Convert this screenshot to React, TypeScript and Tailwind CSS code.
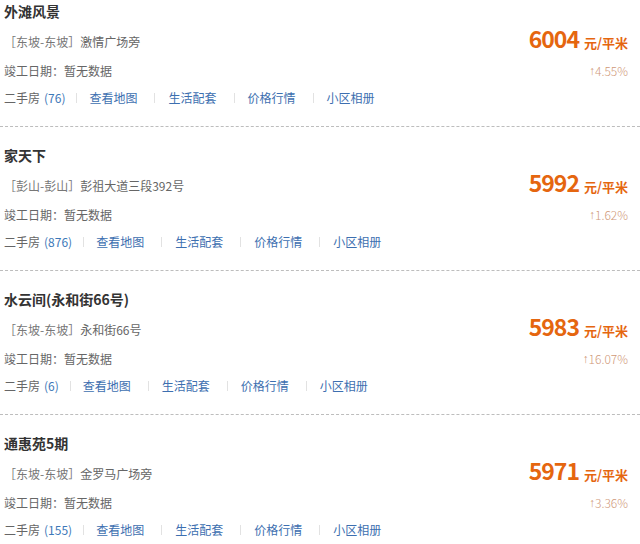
import React from "react";

type Item = {
  name: string;
  area: string;
  addr: string;
  price: string;
  pct: string;
  count: string;
};

const items: Item[] = [
  { name: "外滩风景", area: "东坡-东坡", addr: "激情广场旁", price: "6004", pct: "4.55%", count: "76" },
  { name: "家天下", area: "彭山-彭山", addr: "彭祖大道三段392号", price: "5992", pct: "1.62%", count: "876" },
  { name: "水云间(永和街66号)", area: "东坡-东坡", addr: "永和街66号", price: "5983", pct: "16.07%", count: "6" },
  { name: "通惠苑5期", area: "东坡-东坡", addr: "金罗马广场旁", price: "5971", pct: "3.36%", count: "155" },
];

const font = { fontFamily: '"Microsoft YaHei", "Noto Sans CJK SC", "Noto Sans", sans-serif' };

function Sep({ first }: { first?: boolean }) {
  return (
    <span
      className={
        first
          ? "ml-[11px] mr-[12px] inline-block h-[10px] w-px bg-[#e2e2e2]"
          : "ml-[17px] mr-[13px] inline-block h-[10px] w-px bg-[#e2e2e2]"
      }
    />
  );
}

function Block({ it, first }: { it: Item; first: boolean }) {
  return (
    <div className={first ? "pt-[1px]" : "pt-[18px]"}>
      <div className="border-b border-dashed border-[#bdbdbd]">
        <div className="h-[20px] pl-[4px] text-[14px] font-bold leading-[20px] text-[#333]">{it.name}</div>
        <div className="mt-[6px] flex h-[30px] items-center justify-between pl-[4px] pr-[12px]">
          <div className="text-[12px] text-[#777]">
            ［{it.area}］<span className="text-[#666]">{it.addr}</span>
          </div>
          <div className="mb-[8px] flex items-baseline text-[#e5660f]">
            <span className="text-[23px] font-bold leading-[30px] tracking-[-1px]">{it.price}</span>
            <span className="ml-[5px] text-[13px] font-bold">元/平米</span>
          </div>
        </div>
        <div className="flex h-[27px] items-center justify-between pl-[4px] pr-[12px]">
          <div className="text-[12px] text-[#666]">竣工日期：暂无数据</div>
          <div className="flex items-center text-[12px] font-light text-[#cf9878]">
            <span className="font-['Liberation_Sans',sans-serif] font-normal">↑</span>
            <span>{it.pct}</span>
          </div>
        </div>
        <div className="flex h-[28px] items-center pl-[4px] text-[12px]">
          <span className="text-[#666]">二手房</span>
          <span className="ml-[4px] text-[#3d78b8]">({it.count})</span>
          <Sep first />
          <span className="text-[#3d6fb0]">查看地图</span>
          <Sep />
          <span className="text-[#3d6fb0]">生活配套</span>
          <Sep />
          <span className="text-[#3d6fb0]">价格行情</span>
          <Sep />
          <span className="text-[#3d6fb0]">小区相册</span>
        </div>
        <div className="h-[14px]" />
      </div>
    </div>
  );
}

export default function App() {
  return (
    <div className="h-[544px] w-[640px] overflow-hidden bg-white" style={font}>
      {items.map((it, i) => (
        <Block key={i} it={it} first={i === 0} />
      ))}
    </div>
  );
}
